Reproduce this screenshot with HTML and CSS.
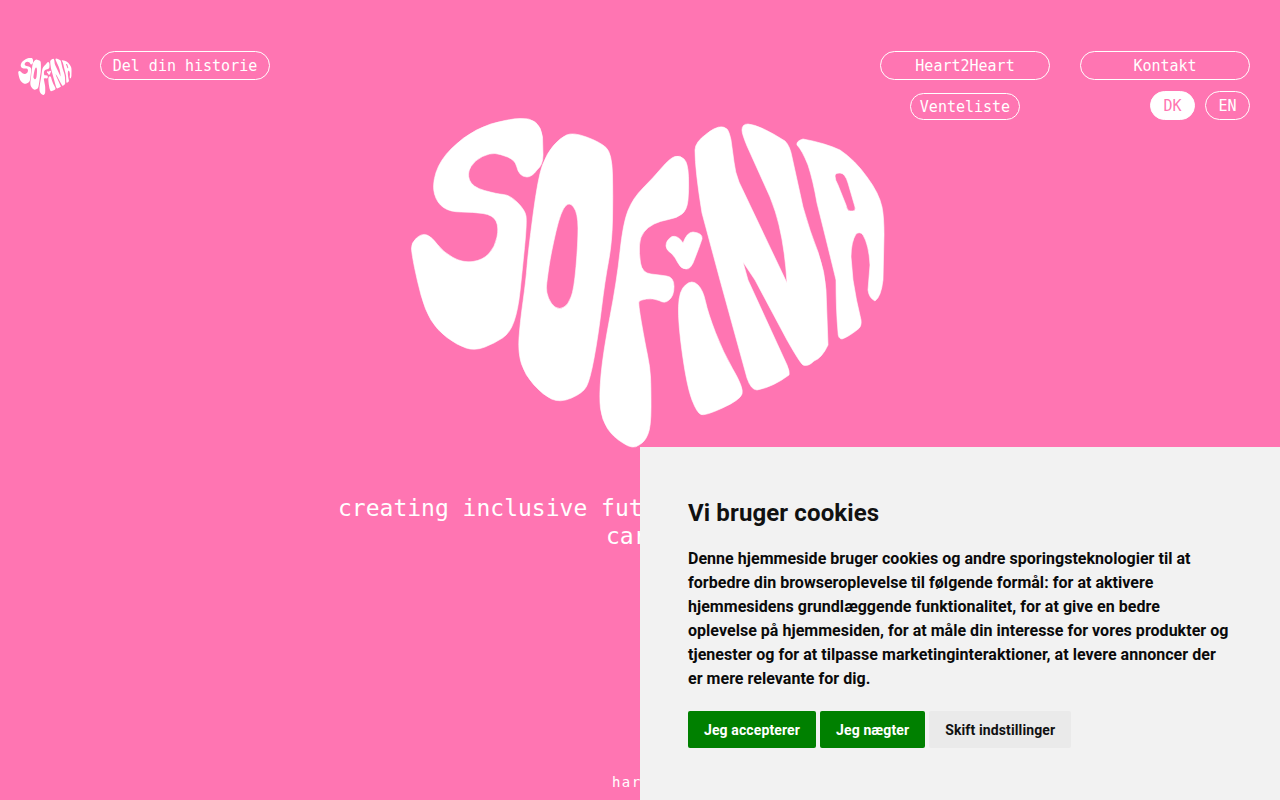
FILE: index.html
```html
<!DOCTYPE html>
<html lang="da">
<head>
<meta charset="utf-8">
<title>Sofina</title>
<link rel="stylesheet" href="styles.css">
</head>
<body>
<svg class="defs" width="0" height="0" aria-hidden="true">
  <symbol id="sofina" viewBox="396 120 488 328" overflow="visible">
    <path d="M505,120.5 Q515,118.5 520,118.5 Q540,117 542.5,137 L543,155 Q543,165 537,170 Q532,177 527,177 Q519,177 516.5,166 Q515,160 507.5,157 Q500,154 495,153.5 Q490,153 482.5,156.5 Q475,160 471,166.5 Q467,173 469.5,180 Q472,187 484.5,190.5 Q497,194 503.5,194.5 Q510,195 517.5,202.5 Q525,210 526,216 Q527,222 524.5,247.5 Q522,273 520,291.5 Q518,310 514,321.5 Q510,333 502.5,338 Q495,343 485,347 Q475,351 466,348 Q457,345 447,337.5 Q437,330 431,320 Q425,310 421,295 Q417,280 414.5,267.5 Q412,255 411.5,249 Q411,243 416.5,238 Q422,233 427,235 Q432,237 437.5,244.5 Q443,252 453,257.5 Q463,263 473,261.5 Q483,260 489,253.5 Q495,247 497,237 Q499,227 496,221 Q493,215 483,213.5 Q473,212 461.5,212 Q450,212 443.5,207.5 Q437,203 434.5,194 Q432,185 436,172.5 Q440,160 451.5,148.5 Q463,137 476.5,130 Q490,123 505,120.5 Z"/>
    <path fill-rule="evenodd" d="M566.5,135 Q573,132 586.5,137 Q600,142 606,147.5 Q612,153 612.5,175 Q613,197 612.5,220 Q612,243 608.5,261.5 Q605,280 601.5,308.5 Q598,337 594,358.5 Q590,380 586.5,386.5 Q583,393 571.5,398 Q560,403 551.5,399 Q543,395 534,385 Q525,375 521.5,364 Q518,353 519,338 Q520,323 523,301.5 Q526,280 527,266.5 Q528,253 533,215 Q538,177 542.5,165 Q547,153 553.5,145.5 Q560,138 566.5,135 Z M566,205.5 Q570,202 573.5,207 Q578,213 578,228 Q578,243 576,266.5 Q574,290 571,297 Q568,305 564,307 Q560,310 555,307 Q551,304 548.5,298 Q546,292 546.5,286 Q547,280 549,266.5 Q551,253 556,231.5 Q561,210 566,205.5 Z"/>
    <path d="M675,156.5 Q680,155 684,159 Q688,163 688.5,176.5 Q689,190 688,200 Q687,210 682,214 Q677,218 668.5,219.5 Q660,221 654,224 Q648,227 644,232 Q640,237 639.5,245 Q639,253 640.5,263 Q642,273 651,274 Q660,275 666.5,276 Q674,277 674,286.5 Q674,296 669,300 Q665,304 659,300.5 Q653,298 646.5,299 Q640,300 639,301.5 Q638,303 641.5,323 Q645,343 647.5,355 Q650,367 650.5,377 Q651,387 651,407 Q651,427 648,434 Q645,442 639,445 Q633,450 623,443 Q613,437 607.5,428.5 Q602,420 600.5,408.5 Q599,397 601,375 Q603,353 610,316.5 Q617,280 620,251.5 Q623,223 628,210.5 Q633,198 643,188 Q653,178 661.5,168 Q670,158 675,156.5 Z"/>
    <path d="M666,246 Q666,240 672,236.5 Q678,235 683,243 Q687,232 693,232 Q703,233 702,239 Q699,248 695,258 Q691,270 686,269 Q681,269 678,263 Q675,257 672,254 Q666,250 666,246 Z"/>
    <path d="M685.5,285 Q692,279 698,285 Q703,290 705.5,301.5 Q708,313 715.5,332.5 Q723,352 732.5,368.5 Q744,388 742,394 Q740,400 722.5,408 Q705,416 701,414.5 Q697,413 692,400 Q687,387 682.5,355 Q678,323 678.5,306.5 Q679,290 685.5,285 Z"/>
    <path d="M695,150 Q695,142 707,133.5 Q720,123 727,129 Q729,131 731,140 L734,162 Q735,172 739,182 L787,283 Q785,250 779,225 Q776,212 770,197 L747,146 Q742,134 742,130 Q742,124 748,124 Q760,125 785,141 Q790,146 792,157 L803,207 Q810,232 818,252 Q825,272 826,290 L828,345 Q822,358 814,361 Q808,367 803,365 Q800,363 787,340 L755,280 L743,262 L748,280 L787,365 Q790,372 789,375 Q773,387 757,390 Q751,390 747,378 L720,280 L702,213 Q695,170 695,150 Z"/>
    <path fill-rule="evenodd" d="M797,145 Q796,141 803,139 Q825,143 840,150 Q855,160 867,177 Q879,193 882,207 Q884,217 884,235 L883,280 Q881,297 875,301 Q869,298 868,290 L870,265 Q869,245 863,235 Q860,231 856,234 Q851,242 851,257 L853,280 Q856,300 861,320 Q862,327 857,330 Q848,337 842,339 Q838,339 838,332 Q836,310 836,280 Q830,255 817,203 Q813,180 808,165 Q802,150 797,145 Z M835,176 Q835,173 840,173 Q845,173 848,183 L855,207 Q856,211 853,211 L850,211 Q847,211 846,205 L838,185 Q835,180 835,176 Z"/>
  </symbol>
</svg>
<div class="page">
  <header class="header">
    <a class="brand" href="#" aria-label="Sofina"><svg class="brand-logo"><use href="#sofina"/></svg></a>
    <a class="pill pill-story" href="#">Del din historie</a>
    <nav class="nav-right">
      <a class="pill" href="#">Heart2Heart</a>
      <a class="pill" href="#">Kontakt</a>
      <a class="pill pill-wait" href="#">Venteliste</a>
      <div class="langs">
        <a class="pill lang lang-active" href="#">DK</a>
        <a class="pill lang" href="#">EN</a>
      </div>
    </nav>
  </header>
  <main class="hero">
    <svg class="hero-logo" role="img" aria-label="Sofina"><use href="#sofina"/></svg>
    <p class="tagline"><span class="line line-one">creating inclusive fut</span><span class="line line-two">car</span></p>
  </main>
  <footer class="footer">har</footer>
</div>
<aside class="cookies">
  <h2 class="cookies-title">Vi bruger cookies</h2>
  <p class="cookies-text">Denne hjemmeside bruger cookies og andre sporingsteknologier til at forbedre din browseroplevelse til følgende formål: for at aktivere hjemmesidens grundlæggende funktionalitet, for at give en bedre oplevelse på hjemmesiden, for at måle din interesse for vores produkter og tjenester og for at tilpasse marketinginteraktioner, at levere annoncer der er mere relevante for dig.</p>
  <div class="cookies-actions">
    <button class="btn btn-green">Jeg accepterer</button>
    <button class="btn btn-green">Jeg nægter</button>
    <button class="btn btn-grey">Skift indstillinger</button>
  </div>
</aside>
</body>
</html>
```
FILE: styles.css
```css
* { box-sizing: border-box; }
html, body { margin: 0; height: 100%; overflow: hidden; }
body { background: #ff75b2; color: #fff; font-family: "DejaVu Sans Mono", "Liberation Mono", monospace; }
.defs { position: absolute; }
.page { height: 800px; display: flex; flex-direction: column; }
.header { display: flex; align-items: flex-start; padding: 51px 30px 0 16px; height: 120px; }
.brand { display: block; width: 56px; height: 37px; margin-top: 7px; margin-right: 28px; }
.brand-logo { display: block; width: 100%; height: 100%; fill: #fff; }
.pill { display: flex; align-items: center; justify-content: center; height: 29px; border: 1px solid #fff; border-radius: 15px; color: #fff; font-size: 15px; text-decoration: none; white-space: nowrap; }
.pill-story { width: 170px; }
.nav-right { margin-left: auto; display: grid; grid-template-columns: 170px 170px; column-gap: 30px; row-gap: 11px; }
.pill-wait { width: 110px; height: 27px; justify-self: center; align-self: end; }
.langs { display: flex; justify-content: flex-end; gap: 10px; }
.lang { width: 45px; }
.lang-active { background: #fff; color: #ff75b2; }
.hero { flex: 1; display: flex; flex-direction: column; align-items: center; }
.hero-logo { display: block; width: 488px; height: 328px; fill: #fff; stroke: #fff; stroke-width: 0.6; stroke-linejoin: round; overflow: visible; }
.tagline { align-self: stretch; margin: 46px 0 0; font-size: 23px; line-height: 28px; }
.line { display: block; white-space: nowrap; }
.line-one { padding-left: 338px; }
.line-two { padding-left: 606px; }
.footer { padding: 0 0 9px 612px; font-size: 14px; line-height: 18px; letter-spacing: 1.4px; }
.cookies { position: fixed; right: 0; bottom: 0; width: 640px; height: 353px; padding: 48px; background: #f2f2f2; color: #111; font-family: Roboto, "Liberation Sans", sans-serif; }
.cookies-title { margin: 0 0 16px; font-size: 24px; line-height: 36px; font-weight: 700; letter-spacing: 0.12px; }
.cookies-text { margin: 0 0 20px; font-size: 16px; line-height: 24px; font-weight: 700; letter-spacing: 0.03px; color: #0a0a0a; }
.cookies-actions { display: flex; gap: 4px; }
.btn { height: 37px; padding: 0 16px; border: 0; border-radius: 2px; font-family: Roboto, "Liberation Sans", sans-serif; font-size: 14px; font-weight: 700; letter-spacing: 0.12px; }
.btn-green { background: #008000; color: #fff; }
.btn-grey { background: #eaeaea; color: #111; }
```
